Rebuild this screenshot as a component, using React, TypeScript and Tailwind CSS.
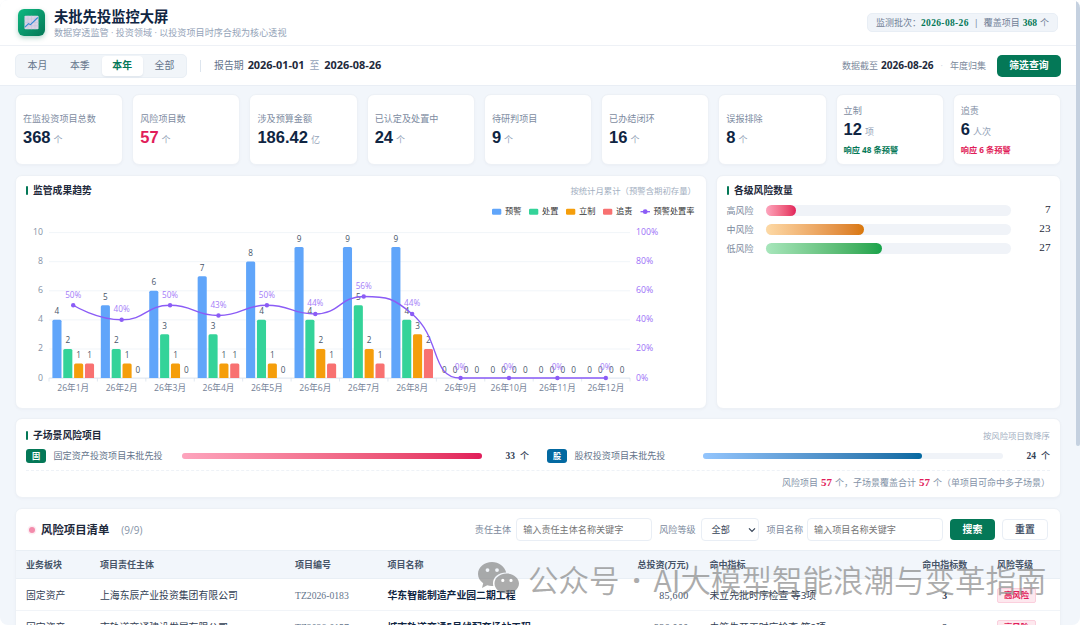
import { ReactNode } from "react";

const tabs = ["本月", "本季", "本年", "全部"];

const kpis = [
  { label: "在监投资项目总数", value: "368", unit: "个" },
  { label: "风险项目数", value: "57", unit: "个", danger: true },
  { label: "涉及预算金额", value: "186.42", unit: "亿" },
  { label: "已认定及处置中", value: "24", unit: "个" },
  { label: "待研判项目", value: "9", unit: "个" },
  { label: "已办结闭环", value: "16", unit: "个" },
  { label: "误报排除", value: "8", unit: "个" },
  { label: "立制", value: "12", unit: "项", note: "响应 48 条预警", noteColor: "text-[#047857]" },
  { label: "追责", value: "6", unit: "人次", note: "响应 6 条预警", noteColor: "text-[#e11d5a]" },
];

const trend = [
  { bars: [4, 2, 1, 1], rate: 50 },
  { bars: [5, 2, 1, 0], rate: 40 },
  { bars: [6, 3, 1, 0], rate: 50 },
  { bars: [7, 3, 1, 1], rate: 43 },
  { bars: [8, 4, 1, 0], rate: 50 },
  { bars: [9, 4, 2, 1], rate: 44 },
  { bars: [9, 5, 2, 1], rate: 56 },
  { bars: [9, 4, 3, 2], rate: 44 },
  { bars: [0, 0, 0, 0], rate: 0 },
  { bars: [0, 0, 0, 0], rate: 0 },
  { bars: [0, 0, 0, 0], rate: 0 },
  { bars: [0, 0, 0, 0], rate: 0 },
];

const series = [
  { name: "预警", color: "#60a5fa", x: 477 },
  { name: "处置", color: "#34d399", x: 514 },
  { name: "立制", color: "#f59e0b", x: 551 },
  { name: "追责", color: "#f87171", x: 588 },
];

const levels = [
  { name: "高风险", value: 7, pct: 12.4, fill: "from-[#fda4bd] to-[#e11d5a]" },
  { name: "中风险", value: 23, pct: 40.4, fill: "from-[#fdd9a5] to-[#d97706]" },
  { name: "低风险", value: 27, pct: 47.4, fill: "from-[#a7e6bb] to-[#16a34a]" },
];

const scenes = [
  { tag: "固", name: "固定资产投资项目未批先投", value: 33, pct: 100, tagBg: "bg-[#047857]", fill: "from-[#fda4bd] to-[#e11d5a]" },
  { tag: "股", name: "股权投资项目未批先投", value: 24, pct: 73, tagBg: "bg-[#0369a1]", fill: "from-[#93c5fd] to-[#0369a1]" },
];

const rows = [
  { biz: "固定资产", org: "上海东辰产业投资集团有限公司", code: "TZ2026-0183", name: "华东智能制造产业园二期工程", amount: "85,600", hit: "未立先批时序检查 等3项", count: 3 },
  { biz: "固定资产", org: "市轨道交通建设发展有限公司", code: "TZ2026-0157", name: "城市轨道交通5号线配套场站工程", amount: "326,000", hit: "未筹先开工时序检查 等2项", count: 2 },
];

type Pt = { x: number; y: number };

const clamp = (v: number, a: number, b: number) => Math.min(Math.max(v, Math.min(a, b)), Math.max(a, b));

// smooth curve whose control points never overshoot the neighbouring values
function smoothPath(pts: Pt[], smooth = 0.5) {
  let d = `M${pts[0].x} ${pts[0].y}`;
  let c: Pt = pts[0];
  for (let i = 1; i < pts.length; i++) {
    const p = pts[i];
    const prev = pts[i - 1];
    const next = pts[i + 1];
    let before: Pt = p;
    let after: Pt = p;
    if (next) {
      const lp = Math.hypot(p.x - prev.x, p.y - prev.y);
      const ln = Math.hypot(next.x - p.x, next.y - p.y);
      const r = ln / (ln + lp);
      const vx = next.x - prev.x;
      const vy = next.y - prev.y;
      const nx = clamp(p.x + vx * smooth * r, next.x, p.x);
      const ny = clamp(p.y + vy * smooth * r, next.y, p.y);
      before = {
        x: clamp(p.x - ((nx - p.x) * lp) / ln, prev.x, p.x),
        y: clamp(p.y - ((ny - p.y) * lp) / ln, prev.y, p.y),
      };
      after = {
        x: p.x + ((p.x - before.x) * ln) / lp,
        y: p.y + ((p.y - before.y) * ln) / lp,
      };
    }
    d += `C${c.x} ${c.y} ${before.x} ${before.y} ${p.x} ${p.y}`;
    c = after;
  }
  return d;
}

const X0 = 34;
const STEP = 48.42;
const Y0 = 177;
const UNIT = 14.55;

function TrendChart() {
  const pts = trend.map((t, i) => ({ x: X0 + STEP * (i + 0.5), y: Y0 - (t.rate / 10) * UNIT }));
  return (
    <svg width="691" height="206" viewBox="0 0 691 206" className="block font-['Open_Sans','Noto_Sans_CJK_SC',sans-serif] text-[8.2px]">
      {series.map((s) => (
        <g key={s.name}>
          <rect x={s.x} y="7.7" width="9.3" height="6" rx="1.3" fill={s.color} />
          <text x={s.x + 13} y="13.2" fill="#333333">{s.name}</text>
        </g>
      ))}
      <path d="M625.5 10.7h9.5" stroke="#8b5cf6" strokeWidth="1.3" />
      <circle cx="630.2" cy="10.7" r="2.4" fill="#8b5cf6" />
      <text x="638.5" y="13.2" fill="#333333">预警处置率</text>

      {[0, 2, 4, 6, 8, 10].map((v) => (
        <g key={v} className="text-[8.7px]">
          <path d={`M${X0} ${Y0 - v * UNIT + 0.1}H${X0 + STEP * 12}`} stroke={v ? "#f1f5f9" : "#dbe3ee"} strokeWidth="1" />
          <text x="28" y={Y0 - v * UNIT + 2.5} textAnchor="end" fill="#8591a5">{v}</text>
          <text x="621" y={Y0 - v * UNIT + 2.5} fill="#9b70f7">{v * 10}%</text>
        </g>
      ))}
      {Array.from({ length: 13 }, (_, i) => (
        <path key={i} d={`M${X0 + STEP * i} ${Y0}v3.5`} stroke="#dbe3ee" strokeWidth="0.8" />
      ))}

      {trend.map((t, i) => (
        <g key={i}>
          {t.bars.map((v, j) => {
            const x = X0 + STEP * i + 3.4 + j * 10.85;
            const h = v * UNIT;
            return v ? (
              <path
                key={j}
                d={`M${x} ${Y0}v${-h + 1.5}q0 -1.5 1.5 -1.5h6.1q1.5 0 1.5 1.5v${h - 1.5}z`}
                fill={series[j].color}
              />
            ) : null;
          })}
          <text x={X0 + STEP * (i + 0.5)} y="189.9" textAnchor="middle" fill="#758297" className="text-[8.6px]">
            {`26年${i + 1}月`}
          </text>
        </g>
      ))}
      {trend.map((t, i) =>
        t.bars.map((v, j) => (
          <text key={`${i}-${j}`} x={X0 + STEP * i + 7.95 + j * 10.85} y={Y0 - v * UNIT - 5.5} textAnchor="middle" fill="#475569">
            {v}
          </text>
        ))
      )}
      <path d={smoothPath(pts)} fill="none" stroke="#8b5cf6" strokeWidth="1.4" />
      {pts.map((p, i) => (
        <g key={i}>
          <circle cx={p.x} cy={p.y} r="2.2" fill="#8b5cf6" />
          <text x={p.x} y={p.y - 7.6} textAnchor="middle" fill="#a47cf8">{trend[i].rate}%</text>
        </g>
      ))}
    </svg>
  );
}

function Card({ className = "", children }: { className?: string; children: ReactNode }) {
  return (
    <section className={`rounded-[7px] border border-[#edf1f6] bg-white shadow-[0_1px_3px_rgba(15,40,80,0.03)] ${className}`}>
      {children}
    </section>
  );
}

function CardTitle({ title, extra }: { title: string; extra?: string }) {
  return (
    <div className="flex h-[14px] items-center justify-between px-[10px]">
      <h2 className="flex items-center gap-[5px] text-[9.8px] font-bold text-[#1e293b]">
        <i className="h-[9px] w-[2px] rounded-sm bg-[#047857]" />
        {title}
      </h2>
      {extra && <span className="text-[8.4px] text-[#a3afc1]">{extra}</span>}
    </div>
  );
}

const tableCols = "grid grid-cols-[74px_195px_92.5px_209px_113px_186px_98.5px_1fr] items-center pl-[10px]";

export default function App() {
  return (
    <div className="relative flex h-[625px] w-[1080px] flex-col overflow-hidden rounded-lg bg-[#f2f6fb] font-['Open_Sans','Noto_Sans_CJK_SC',sans-serif] text-[9px] leading-none whitespace-nowrap text-[#1e293b]">
      {/* Header */}
      <header className="flex h-[46px] shrink-0 items-center border-b border-[#eef1f6] bg-white pr-[22px] pl-[18px] shadow-[0_1px_3px_rgba(15,40,80,0.04)]">
        <div className="flex size-[27px] items-center justify-center rounded-[6px] bg-gradient-to-br from-[#10b981] to-[#047857] shadow-[0_2px_5px_rgba(4,120,87,0.3)]">
          <svg width="15" height="15" viewBox="0 0 15 15">
            <rect x="0.5" y="0.7" width="14" height="13.6" rx="0.8" fill="#d9d3e6" />
            <path d="M.5 4h14M.5 7.4h14M.5 10.8h14M4 .7v13.6M7.5 .7v13.6M11 .7v13.6" stroke="#c5bcd6" strokeWidth="0.5" />
            <path d="M1 12.2 4.5 8.7l2 1L13.8 2.5" fill="none" stroke="#3289d8" strokeWidth="1.1" />
          </svg>
        </div>
        <div className="ml-[9px] pt-[2px]">
          <h1 className="text-[14.3px] leading-[16px] font-bold text-[#0f2542]">未批先投监控大屏</h1>
          <p className="mt-[2px] text-[9.1px] leading-[12px] text-[#94a3b8]">数据穿透监管 · 投资领域 · 以投资项目时序合规为核心透视</p>
        </div>
        <div className="ml-auto h-[19px] w-[191px] rounded-[5px] border border-[#e8eef5] bg-[#f0f4f9] text-center text-[9px] leading-[18px] text-[#708096]">
          监测批次：
          <b className="font-['Liberation_Serif',serif] text-[9.5px] tracking-[0.35px] text-[#047857]">2026-08-26</b>
          <span className="mx-[5px]">|</span>覆盖项目
          <b className="mx-[3px] font-['Liberation_Serif',serif] text-[9.5px] text-[#047857]">368</b>个
        </div>
      </header>

      {/* Period toolbar */}
      <div className="flex h-[40px] shrink-0 items-center border-b border-[#e9eef5] bg-white pr-[19px] pl-[15px]">
        <div className="flex h-[24px] w-[172px] items-center justify-between rounded-[5px] border border-[#e9eff5] bg-[#f1f5f9] px-px">
          {tabs.map((t) => (
            <button
              key={t}
              className={`h-[20px] w-[41px] rounded-[4px] text-[9.9px] ${
                t === "本年" ? "bg-white font-bold text-[#047857] shadow-[0_1px_2px_rgba(15,40,80,0.08)]" : "text-[#64748b]"
              }`}
            >
              {t}
            </button>
          ))}
        </div>
        <i className="mr-[13px] ml-[13px] h-[12px] w-px bg-[#dde5ee]" />
        <span className="text-[9.9px] text-[#64748b]">报告期</span>
        <b className="ml-[4px] text-[10.9px]">2026-01-01</b>
        <span className="mx-[5px] text-[9.9px] text-[#94a3b8]">至</span>
        <b className="text-[10.9px]">2026-08-26</b>
        <div className="ml-auto flex items-center text-[9px] text-[#7b899c]">
          数据截至<b className="ml-[3px] text-[10.1px] text-[#1e293b]">2026-08-26</b>
          <span className="mx-[7px] text-[#cbd5e1]">·</span>年度归集
        </div>
        <button className="ml-[11px] h-[22px] w-[64px] rounded-[5px] bg-[#047857] text-[9.9px] font-bold text-white">筛选查询</button>
      </div>

      <main className="flex flex-col pt-[8px] pr-[19px] pl-[15px]">
        {/* KPI cards */}
        <div className="grid h-[71px] grid-cols-9 gap-[9px]">
          {kpis.map((k) => (
            <Card key={k.label} className="flex flex-col justify-center px-[7px]">
              <span className="text-[9.1px] leading-[12px] text-[#7d8b9f]">{k.label}</span>
              <div className={`mt-[3px] flex items-baseline ${k.danger ? "text-[#e11d5a]" : "text-[#0f2542]"}`}>
                <b className="font-['Liberation_Sans',sans-serif] text-[16.5px] leading-[18px]">{k.value}</b>
                <span className="ml-[3px] text-[9px] text-[#94a3b8]">{k.unit}</span>
              </div>
              {k.note && <span className={`mt-[7px] text-[8.2px] leading-[10px] font-bold ${k.noteColor}`}>{k.note}</span>}
            </Card>
          ))}
        </div>

        {/* Trend and levels */}
        <div className="mt-[10px] grid h-[234px] grid-cols-[2fr_1fr] gap-[9px]">
          <Card className="pt-[8px]">
            <CardTitle title="监管成果趋势" extra="按统计月累计（预警含期初存量）" />
            <div className="mt-[3px] -ml-px">
              <TrendChart />
            </div>
          </Card>
          <Card className="pt-[8px]">
            <CardTitle title="各级风险数量" />
            <div className="mt-[6.5px] flex flex-col gap-[8px] px-[9.5px]">
              {levels.map((l) => (
                <div key={l.name} className="flex h-[11px] items-center">
                  <span className="w-[39px] text-[9px] text-[#7b899c]">{l.name}</span>
                  <div className="h-[11px] w-[245px] rounded-full bg-[#f0f3f8]">
                    <div className={`h-full rounded-full bg-gradient-to-r ${l.fill}`} style={{ width: `${l.pct}%` }} />
                  </div>
                  <span className="ml-auto font-['Liberation_Serif',serif] text-[11.2px] text-[#1e293b]">{l.value}</span>
                </div>
              ))}
            </div>
          </Card>
        </div>

        {/* Sub scenes */}
        <Card className="mt-[9px] h-[80px] pt-[10px]">
          <CardTitle title="子场景风险项目" extra="按风险项目数降序" />
          <div className="mx-[10px] grid h-[28px] grid-cols-2 gap-[18px] border-b border-dashed border-[#eef2f7] pb-px">
            {scenes.map((s) => (
              <div key={s.tag} className="flex items-center">
                <span className={`flex h-[14px] w-[20px] items-center justify-center rounded-[3px] text-[8.2px] font-bold text-white ${s.tagBg}`}>{s.tag}</span>
                <span className="ml-[7.5px] w-[128.5px] text-[9.1px] text-[#64748b]">{s.name}</span>
                <div className="h-[6px] w-[300px] rounded-full bg-[#f0f3f8]">
                  <div className={`h-full rounded-full bg-gradient-to-r ${s.fill}`} style={{ width: `${s.pct}%` }} />
                </div>
                <span className="ml-auto flex items-baseline gap-[5px] text-[#334155]">
                  <b className="font-['Liberation_Serif',serif] text-[9.5px]">{s.value}</b>
                  <span className="text-[9px] font-medium">个</span>
                </span>
              </div>
            ))}
          </div>
          <p className="mt-[6px] pr-[10px] text-right text-[9px] leading-[12px] text-[#8493a8]">
            风险项目<b className="mx-[3px] font-['Liberation_Serif',serif] text-[11px] leading-none text-[#e11d5a]">57</b>个，子场景覆盖合计
            <b className="mx-[3px] font-['Liberation_Serif',serif] text-[11px] leading-none text-[#e11d5a]">57</b>个（单项目可命中多子场景）
          </p>
        </Card>

        {/* Project list */}
        <Card className="mt-[10px] h-[140px]">
          <div className="flex h-[41px] items-center pr-[12px] pl-[13px]">
            <i className="size-[6px] rounded-full bg-[#f38bab] shadow-[0_0_0_1.5px_#fdecf2]" />
            <h2 className="ml-[6px] text-[11.4px] font-bold">风险项目清单</h2>
            <span className="ml-[12px] text-[10px] text-[#8593a7]">(9/9)</span>
            <div className="ml-auto flex items-center text-[9.1px] text-[#7b899c]">
              责任主体
              <input placeholder="输入责任主体名称关键字" className="ml-[5px] h-[23px] w-[136px] rounded-[4px] border border-[#e9eef5] px-[6px] text-[9.1px] placeholder:text-[#757575]" />
              <span className="ml-[7px]">风险等级</span>
              <div className="ml-[5px] flex h-[23px] w-[58px] items-center justify-between rounded-[4px] border border-[#e9eef5] pr-[2px] pl-[10px] text-[#334155]">
                全部
                <svg width="8" height="6" viewBox="0 0 8 6"><path d="M1 1.3 4 4.3 7 1.3" fill="none" stroke="#334155" strokeWidth="1.2" /></svg>
              </div>
              <span className="ml-[8px]">项目名称</span>
              <input placeholder="输入项目名称关键字" className="ml-[4px] h-[23px] w-[136px] rounded-[4px] border border-[#e9eef5] px-[6px] text-[9.1px] placeholder:text-[#757575]" />
              <button className="ml-[7px] h-[21px] w-[45px] rounded-[4px] bg-[#047857] text-[9.9px] font-bold text-white">搜索</button>
              <button className="ml-[7px] h-[21px] w-[46px] rounded-[4px] border border-[#e9eef5] text-[9.9px] font-bold text-[#475569]">重置</button>
            </div>
          </div>
          <div className={`${tableCols} h-[29px] border-y border-[#e9eff5] bg-[#f2f6fb] text-[9px] font-bold text-[#475569]`}>
            <span>业务板块</span>
            <span>项目责任主体</span>
            <span>项目编号</span>
            <span>项目名称</span>
            <span className="pr-[21px] text-right">总投资(万元)</span>
            <span>命中指标</span>
            <span className="text-center">命中指标数</span>
            <span className="pl-[3px]">风险等级</span>
          </div>
          {rows.map((r) => (
            <div key={r.code} className={`${tableCols} h-[32px] border-b border-[#f1f4f8] pt-[2px] text-[9.85px] text-[#334155]`}>
              <span>{r.biz}</span>
              <span>{r.org}</span>
              <span className="font-['Liberation_Serif',serif] text-[9.7px] text-[#64748b]">{r.code}</span>
              <b className="text-[#0f2542]">{r.name}</b>
              <span className="pr-[21px] text-right font-['Liberation_Serif',serif] text-[10px] tracking-[0.3px] text-[#475569]">{r.amount}</span>
              <span>{r.hit}</span>
              <b className="text-center font-['Liberation_Serif',serif]">{r.count}</b>
              <span className="ml-[3px] flex h-[15px] w-[39px] items-center justify-center rounded-[2px] border border-[#fbcfdd] bg-[#fde8ee] text-[8.4px] font-bold text-[#e11d5a]">高风险</span>
            </div>
          ))}
        </Card>
      </main>

      {/* Watermark */}
      <div className="pointer-events-none absolute top-[560px] left-[477px] flex items-center text-[30.5px] leading-[38px] font-[350] text-[#808080] opacity-65">
        <svg width="44" height="36" viewBox="0 0 44 36" fill="currentColor">
          <path
            fillRule="evenodd"
            d="M15 1C7.300 1 1 6.300 1 13c0 3.800 2 7 5.200 9.200L5 27l5.200-2.700c1.900.6 4 .8 6.100.6A11 11 0 0 1 16 22.300C16 16 21.800 11.500 29 11.500h.2C27.600 5.400 21.800 1 15 1ZM10.500 7.200a1.900 1.900 0 1 1 0 3.800 1.900 1.900 0 0 1 0-3.800ZM20 7.200a1.900 1.900 0 1 1 0 3.800 1.900 1.900 0 0 1 0-3.800Z"
          />
          <path
            fillRule="evenodd"
            d="M29.800 12.600c-6.800 0-12.300 4.400-12.300 9.900s5.500 9.900 12.300 9.900c1.500 0 3-.2 4.300-.6l4.400 2.300-1.200-3.900c2.900-1.800 4.700-4.600 4.700-7.700 0-5.500-5.500-9.900-12.200-9.900ZM25.800 17.800a1.600 1.600 0 1 1 0 3.200 1.600 1.600 0 0 1 0-3.200ZM34 17.800a1.600 1.600 0 1 1 0 3.200 1.600 1.600 0 0 1 0-3.200Z"
          />
        </svg>
        <span className="ml-[7px] font-['Noto_Sans_CJK_SC',sans-serif]">公众号</span>
        <span className="w-[34px] text-center font-['Open_Sans',sans-serif] font-bold">·</span>
        <span className="font-['Noto_Sans_CJK_SC',sans-serif]">AI大模型智能浪潮与变革指南</span>
      </div>

      {/* Scrollbar */}
      <div className="absolute top-0 right-0 h-[446px] w-[4px] rounded-b-full bg-[#c5d1e0]" />
    </div>
  );
}
